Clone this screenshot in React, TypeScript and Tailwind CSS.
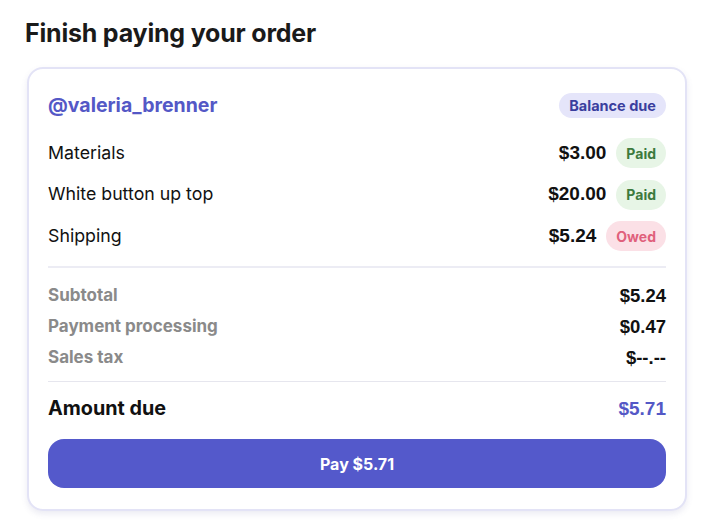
import React from "react";

const items = [
  { label: "Materials", amount: "$3.00", status: "Paid" },
  { label: "White button up top", amount: "$20.00", status: "Paid" },
  { label: "Shipping", amount: "$5.24", status: "Owed" },
];

const summary = [
  { label: "Subtotal", amount: "$5.24" },
  { label: "Payment processing", amount: "$0.47" },
  { label: "Sales tax", amount: "$--.--" },
];

export default function App() {
  return (
    <div
      className="w-[720px] h-[531px] bg-white pl-[25px] pt-[18px]"
      style={{ fontFamily: "Inter, 'Open Sans', sans-serif" }}
    >
      <h1 className="text-[25px] leading-[30px] font-bold text-[#1a1a1a] tracking-[-0.2px]">
        Finish paying your order
      </h1>
      <div className="mt-[19px] ml-[2px] w-[660px] h-[444px] rounded-[16px] border-2 border-[#e3e3f6] bg-white shadow-[0_3px_6px_rgba(90,90,160,0.12)] px-[19px] pt-[24px]">
        <div className="flex items-center justify-between h-[25px]">
          <span className="text-[19.5px] font-bold text-[#5458c6]">@valeria_brenner</span>
          <span className="h-[25px] px-[10px] rounded-full bg-[#e5e5fa] text-[#3a3e9e] text-[14.5px] font-bold flex items-center">
            Balance due
          </span>
        </div>
        <div className="mt-[20px] flex flex-col gap-[11.5px]">
          {items.map((it) => (
            <div key={it.label} className="flex items-center justify-between h-[30px]">
              <span className="text-[17.75px] text-[#111]">{it.label}</span>
              <div className="flex items-center gap-[10px]">
                <span
                  className="text-[19px] font-bold text-[#111]"
                  style={{ fontFamily: "'Liberation Sans', Arial, sans-serif" }}
                >
                  {it.amount}
                </span>
                <span
                  className={
                    it.status === "Paid"
                      ? "h-[30px] px-[10px] rounded-full bg-[#e7f5e6] text-[#3d7a3d] text-[14px] font-bold flex items-center"
                      : "h-[30px] px-[10px] rounded-full bg-[#fbe0e6] text-[#e0607c] text-[14px] font-bold flex items-center"
                  }
                >
                  {it.status}
                </span>
              </div>
            </div>
          ))}
        </div>
        <div className="mt-[15px] h-[2px] bg-[#ececf4]" />
        <div className="mt-[16px] flex flex-col gap-[7px]">
          {summary.map((s) => (
            <div key={s.label} className="flex items-center justify-between h-[24px]">
              <span className="text-[17px] font-bold text-[#8a8a8a]">{s.label}</span>
              <span
                className="text-[18.5px] font-bold text-[#111]"
                style={{ fontFamily: "'Liberation Sans', Arial, sans-serif" }}
              >
                {s.amount}
              </span>
            </div>
          ))}
        </div>
        <div className="mt-[11px] h-[1px] bg-[#e6e6ee]" />
        <div className="mt-[13px] flex items-center justify-between h-[28px]">
          <span className="text-[19.8px] font-bold text-[#111]">Amount due</span>
          <span
            className="text-[19px] font-bold text-[#5458c6]"
            style={{ fontFamily: "'Liberation Sans', Arial, sans-serif" }}
          >
            $5.71
          </span>
        </div>
        <button className="mt-[16px] w-full h-[49px] rounded-[16px] bg-[#5459cb] text-white text-[16px] font-bold flex items-center justify-center">
          Pay $5.71
        </button>
      </div>
    </div>
  );
}
